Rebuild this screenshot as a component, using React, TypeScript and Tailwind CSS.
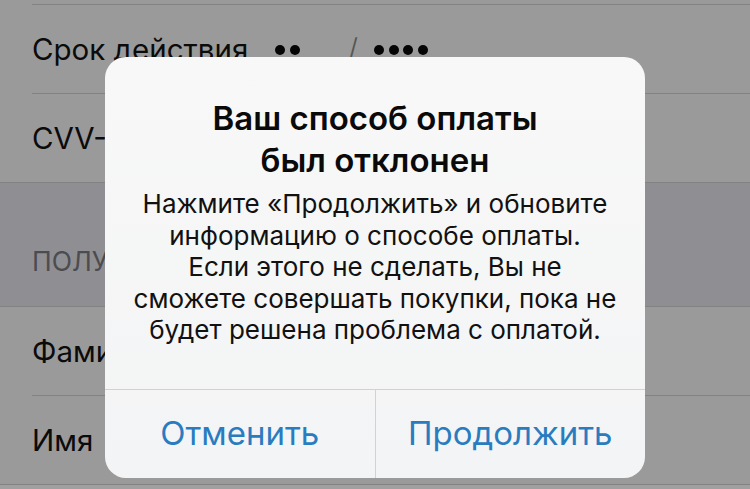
import React from 'react';

const font = { fontFamily: 'Inter, "Noto Sans", sans-serif' };

function Row({ children, inset = true }: { children?: React.ReactNode; inset?: boolean }) {
  return (
    <div className={inset ? 'pl-[32px] bg-[#9a9a9a]' : 'pl-[32px] bg-[#9a9a9a] border-b border-[#828282]'}>
      <div
        className={
          inset
            ? 'h-[89px] flex items-center border-b border-[#828282] text-[29.5px] text-[#0b0b0b]'
            : 'h-[88px] flex items-center text-[29.5px] text-[#0b0b0b]'
        }
      >
        {children}
      </div>
    </div>
  );
}

function Dots({ n }: { n: number }) {
  return (
    <span className="flex items-center gap-[4.5px]">
      {Array.from({ length: n }).map((_, i) => (
        <span key={i} className="w-[10px] h-[10px] rounded-full bg-[#050505]" />
      ))}
    </span>
  );
}

export default function App() {
  return (
    <div className="relative w-[750px] h-[489px] overflow-hidden bg-[#9c9c9c]" style={font}>
      {/* list behind the alert */}
      <div className="flex flex-col">
        <div className="pl-[32px] bg-[#9a9a9a]">
          <div className="h-[5px] border-b border-[#828282]" />
        </div>
        <Row>
          <span>Срок действия</span>
          <span className="ml-[27px] mt-[2px]">
            <Dots n={2} />
          </span>
          <span className="ml-[48px] text-[#555] font-light">/</span>
          <span className="ml-[16px] mt-[2px]">
            <Dots n={4} />
          </span>
        </Row>
        <Row inset={false}>
          <span>CVV-код</span>
        </Row>
        <div className="h-[124px] bg-[#8f8f93] border-b border-[#828282] pl-[32px] flex items-center pt-[34px]">
          <span className="text-[26.5px] text-[#4c4c50]">ПОЛУЧАТЕЛЬ</span>
        </div>
        <Row>
          <span>Фамилия</span>
        </Row>
        <Row inset={false}>
          <span>Имя</span>
        </Row>
        <div className="h-[20px] bg-[#a0a0a0]" />
      </div>

      {/* alert */}
      <div className="absolute left-[105px] top-[57px] w-[540px] h-[421px] rounded-[21px] bg-gradient-to-b from-[#f8f8f8] to-[#f3f4f5] flex flex-col">
        <div className="flex-1 flex flex-col items-center pt-[40px]">
          <div className="text-[33px] leading-[42px] font-semibold text-[#0a0a0a] text-center">
            Ваш способ оплаты
            <br />
            был отклонен
          </div>
          <div className="mt-[7px] text-[26px] leading-[31.5px] text-[#111] text-center">
            Нажмите «Продолжить» и обновите
            <br />
            информацию о способе оплаты.
            <br />
            Если этого не сделать, Вы не
            <br />
            сможете совершать покупки, пока не
            <br />
            будет решена проблема с оплатой.
          </div>
        </div>
        <div className="h-[89px] flex border-t border-[#d2d2d4]">
          <button className="flex-1 flex items-center justify-center text-[33px] text-[#2a7cc0] border-r border-[#d2d2d4]">
            Отменить
          </button>
          <button className="flex-1 flex items-center justify-center text-[33px] text-[#2a7cc0]">
            Продолжить
          </button>
        </div>
      </div>
    </div>
  );
}
